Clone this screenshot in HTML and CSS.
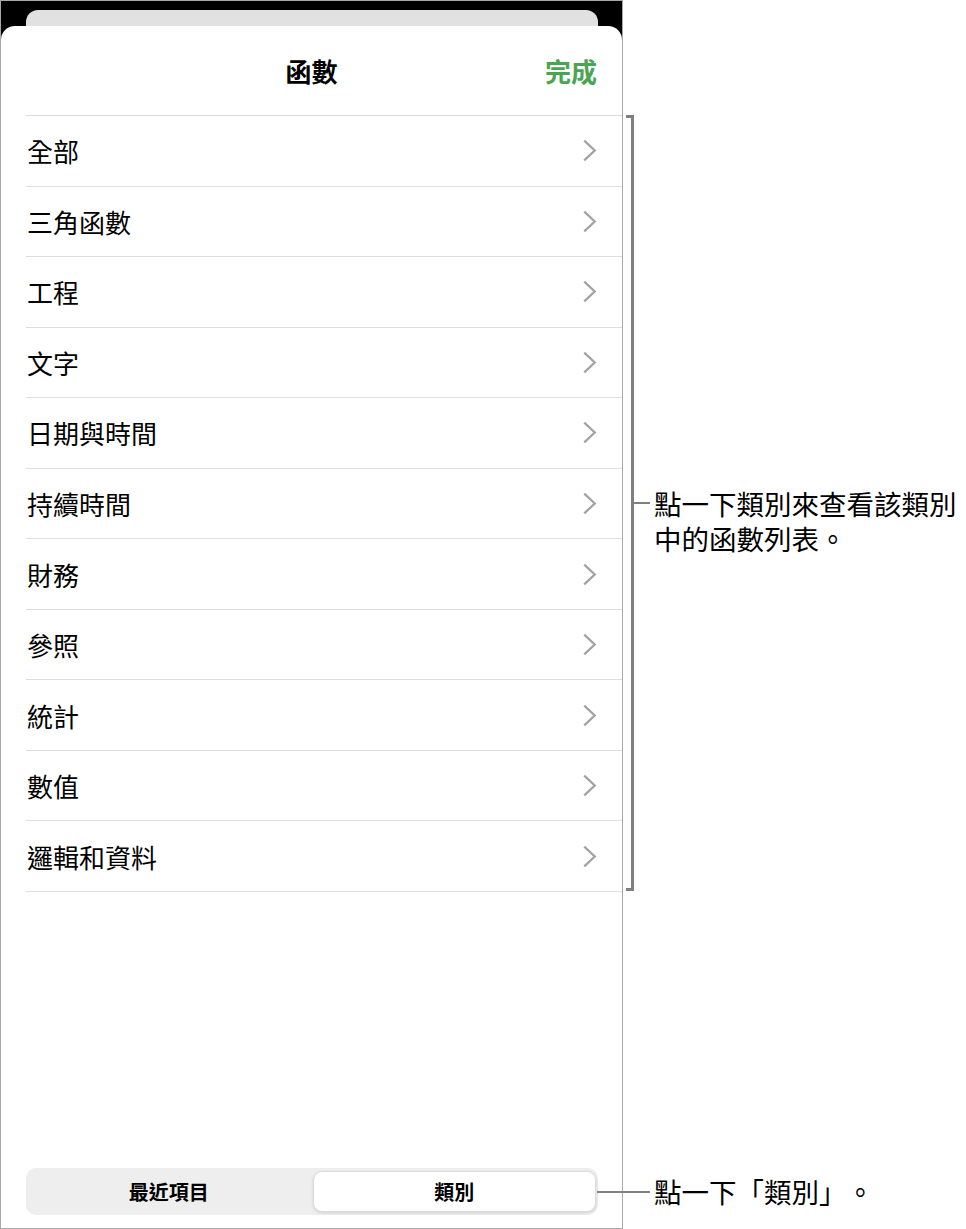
FILE: index.html
```html
<!DOCTYPE html>
<html lang="zh-Hant">
<head>
    <meta charset="UTF-8">
    <meta name="viewport" content="width=device-width, initial-scale=1.0">
    <title>函數</title>
    <link rel="stylesheet" href="styles.css">
</head>
<body>
    <div class="page">
        <div class="device">
            <div class="card-back"></div>
            <div class="sheet">
                <div class="sheet-header">
                    <span></span>
                    <h1 class="sheet-title">函數</h1>
                    <a class="done-btn">完成</a>
                </div>
                <ul class="category-list">
                    <li class="category-row"><span>全部</span><svg class="chevron" viewBox="0 0 14 22"><path d="M2 1.5 L12 11 L2 20.5"/></svg></li>
                    <li class="category-row"><span>三角函數</span><svg class="chevron" viewBox="0 0 14 22"><path d="M2 1.5 L12 11 L2 20.5"/></svg></li>
                    <li class="category-row"><span>工程</span><svg class="chevron" viewBox="0 0 14 22"><path d="M2 1.5 L12 11 L2 20.5"/></svg></li>
                    <li class="category-row"><span>文字</span><svg class="chevron" viewBox="0 0 14 22"><path d="M2 1.5 L12 11 L2 20.5"/></svg></li>
                    <li class="category-row"><span>日期與時間</span><svg class="chevron" viewBox="0 0 14 22"><path d="M2 1.5 L12 11 L2 20.5"/></svg></li>
                    <li class="category-row"><span>持續時間</span><svg class="chevron" viewBox="0 0 14 22"><path d="M2 1.5 L12 11 L2 20.5"/></svg></li>
                    <li class="category-row"><span>財務</span><svg class="chevron" viewBox="0 0 14 22"><path d="M2 1.5 L12 11 L2 20.5"/></svg></li>
                    <li class="category-row"><span>參照</span><svg class="chevron" viewBox="0 0 14 22"><path d="M2 1.5 L12 11 L2 20.5"/></svg></li>
                    <li class="category-row"><span>統計</span><svg class="chevron" viewBox="0 0 14 22"><path d="M2 1.5 L12 11 L2 20.5"/></svg></li>
                    <li class="category-row"><span>數值</span><svg class="chevron" viewBox="0 0 14 22"><path d="M2 1.5 L12 11 L2 20.5"/></svg></li>
                    <li class="category-row"><span>邏輯和資料</span><svg class="chevron" viewBox="0 0 14 22"><path d="M2 1.5 L12 11 L2 20.5"/></svg></li>
                </ul>
                <div class="segmented">
                    <button class="segment">最近項目</button>
                    <button class="segment active">類別</button>
                </div>
            </div>
        </div>
        <div class="notes">
            <div class="bracket-note">
                <div class="bracket"></div>
                <div class="tick"></div>
                <p class="note-text offset">點一下類別來查看該類別<br>中的函數列表。</p>
            </div>
            <div class="bottom-note">
                <div class="tick long"></div>
                <p class="note-text">點一下「類別」。</p>
            </div>
        </div>
    </div>
</body>
</html>
```

FILE: styles.css
```css
body {
    margin: 0;
    background: #fff;
    font-family: "Noto Sans CJK TC", "Noto Sans", sans-serif;
    color: #000;
}
.page {
    display: flex;
    width: 966px;
    height: 1229px;
}
.device {
    width: 623px;
    height: 1229px;
    box-sizing: border-box;
    border: 1px solid #a9a9a9;
    background: #000;
    display: flex;
    flex-direction: column;
}
.card-back {
    height: 16px;
    margin: 9px 24px 0 25px;
    background: #e1e1e1;
    border-radius: 12px 12px 0 0;
}
.sheet {
    flex: 1;
    background: #fff;
    border-radius: 14px 14px 0 0;
    display: flex;
    flex-direction: column;
}
.sheet-header {
    height: 89px;
    display: grid;
    grid-template-columns: 1fr auto 1fr;
    align-items: center;
}
.sheet-title {
    margin: 0;
    font-size: 26px;
    font-weight: bold;
}
.done-btn {
    justify-self: end;
    margin-right: 25px;
    font-size: 26px;
    font-weight: bold;
    color: #4aa553;
}
.category-list {
    list-style: none;
    margin: 0 0 0 25px;
    padding: 0;
    border-top: 1px solid #d9d9d9;
}
.category-row {
    height: 70.55px;
    box-sizing: border-box;
    border-bottom: 1px solid #dedede;
    display: flex;
    align-items: center;
    justify-content: space-between;
    padding: 0 25px 0 1px;
    font-size: 26px;
}
.chevron {
    width: 15px;
    height: 23px;
    fill: none;
    stroke: #a3a3a3;
    stroke-width: 2.2;
}
.segmented {
    margin: auto 24px 13px 25px;
    height: 47px;
    box-sizing: border-box;
    padding: 3px 2px;
    background: #eeeeef;
    border-radius: 10px;
    display: flex;
    gap: 3px;
}
.segment {
    flex: 1;
    border: none;
    background: transparent;
    font-family: inherit;
    font-size: 20px;
    font-weight: bold;
    color: #000;
    border-radius: 9px;
    padding: 0;
}
.segment.active {
    background: #fff;
    border: 1px solid #dcdcdc;
    box-shadow: 0 1px 3px rgba(0, 0, 0, 0.12);
}
.notes {
    flex: 1;
    display: flex;
    flex-direction: column;
}
.bracket-note {
    margin-top: 115px;
    height: 776px;
    display: flex;
    align-items: center;
    padding-left: 3px;
}
.bracket {
    align-self: stretch;
    width: 5px;
    border: 3px solid #808080;
    border-left: none;
}
.tick {
    width: 16px;
    height: 2px;
    background: #808080;
}
.tick.long {
    width: 53px;
    margin-left: -26px;
}
.note-text {
    margin: 0 0 0 4px;
    font-size: 27.5px;
    line-height: 35px;
    white-space: nowrap;
    text-spacing-trim: space-all;
}
.note-text.offset {
    margin-top: 35px;
}
.bottom-note {
    margin-top: auto;
    margin-bottom: 20px;
    display: flex;
    align-items: center;
}
```
